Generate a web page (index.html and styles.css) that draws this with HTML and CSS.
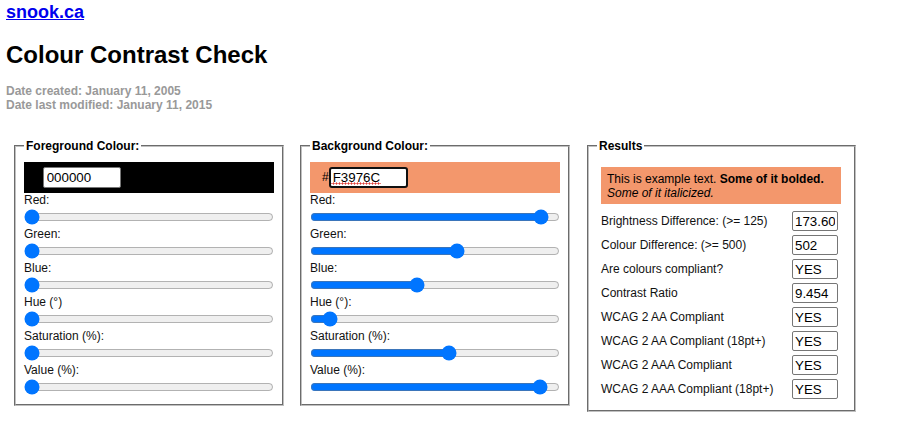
FILE: index.html
```html
<!DOCTYPE html>
<html lang="en">
<head>
<meta charset="utf-8">
<title>Colour Contrast Check</title>
<link rel="stylesheet" href="styles.css">
</head>
<body>
<div class="page">
  <a class="site" href="#">snook.ca</a>
  <h1 class="title">Colour Contrast Check</h1>
  <p class="dates">Date created: January 11, 2005<br>Date last modified: January 11, 2015</p>

  <form class="panels">
    <fieldset class="panel">
      <legend class="legend">Foreground Colour:</legend>
      <div class="swatch swatch-fg">#<input class="hex" type="text" value="000000"></div>
      <label class="lbl">Red:</label>
      <input class="slider" type="range" min="0" max="255" value="0">
      <label class="lbl">Green:</label>
      <input class="slider" type="range" min="0" max="255" value="0">
      <label class="lbl">Blue:</label>
      <input class="slider" type="range" min="0" max="255" value="0">
      <label class="lbl">Hue (°)</label>
      <input class="slider" type="range" min="0" max="360" value="0">
      <label class="lbl">Saturation (%):</label>
      <input class="slider" type="range" min="0" max="100" value="0">
      <label class="lbl">Value (%):</label>
      <input class="slider" type="range" min="0" max="100" value="0">
    </fieldset>

    <fieldset class="panel">
      <legend class="legend">Background Colour:</legend>
      <div class="swatch swatch-bg">#<input class="hex hex-focus" type="text" value="F3976C" spellcheck="false"></div>
      <label class="lbl">Red:</label>
      <input class="slider" type="range" min="0" max="255" value="243">
      <label class="lbl">Green:</label>
      <input class="slider" type="range" min="0" max="255" value="151">
      <label class="lbl">Blue:</label>
      <input class="slider" type="range" min="0" max="255" value="108">
      <label class="lbl">Hue (°):</label>
      <input class="slider" type="range" min="0" max="360" value="19">
      <label class="lbl">Saturation (%):</label>
      <input class="slider" type="range" min="0" max="100" value="56">
      <label class="lbl">Value (%):</label>
      <input class="slider" type="range" min="0" max="100" value="95">
    </fieldset>

    <fieldset class="panel panel-results">
      <legend class="legend">Results</legend>
      <div class="example">This is example text. <strong>Some of it bolded.</strong><br><em>Some of it italicized.</em></div>
      <table class="results">
        <tr><td class="rl">Brightness Difference: (&gt;= 125)</td><td class="rv"><input class="out" type="text" value="173.60"></td></tr>
        <tr><td class="rl">Colour Difference: (&gt;= 500)</td><td class="rv"><input class="out" type="text" value="502"></td></tr>
        <tr><td class="rl">Are colours compliant?</td><td class="rv"><input class="out" type="text" value="YES"></td></tr>
        <tr><td class="rl">Contrast Ratio</td><td class="rv"><input class="out" type="text" value="9.454"></td></tr>
        <tr><td class="rl">WCAG 2 AA Compliant</td><td class="rv"><input class="out" type="text" value="YES"></td></tr>
        <tr><td class="rl">WCAG 2 AA Compliant (18pt+)</td><td class="rv"><input class="out" type="text" value="YES"></td></tr>
        <tr><td class="rl">WCAG 2 AAA Compliant</td><td class="rv"><input class="out" type="text" value="YES"></td></tr>
        <tr><td class="rl">WCAG 2 AAA Compliant (18pt+)</td><td class="rv"><input class="out" type="text" value="YES"></td></tr>
      </table>
    </fieldset>
  </form>
</div>
</body>
</html>
```

FILE: styles.css
```css
html, body {
  margin: 0;
  padding: 0;
  background: #fff;
}

body {
  font-family: "Liberation Sans", Arial, sans-serif;
  font-size: 12px;
  color: #111;
}

.page {
  padding: 2px 6px 0 6px;
}

.site {
  display: block;
  width: max-content;
  font-size: 18px;
  font-weight: bold;
  line-height: 20px;
  color: #0000ee;
  text-decoration: underline;
}

.title {
  margin: 19px 0 15px 0;
  font-size: 24px;
  line-height: 27px;
  font-weight: bold;
  color: #000;
}

.dates {
  margin: 0 0 28px 0;
  padding-top: 1px;
  font-weight: bold;
  line-height: 14px;
  color: #999;
}

.panels {
  display: flex;
  align-items: flex-start;
  gap: 16px;
  margin: -1px 0 0 8px;
}

.panel {
  box-sizing: border-box;
  width: 270px;
  margin: 0;
  padding: 9px 8px 7px 8px;
  border: 2px groove #c0c0c0;
  min-width: 0;
}

.panel-results {
  width: 269px;
  margin-left: 1px;
  padding-bottom: 8px;
}

.legend {
  padding: 0 2px;
  font-weight: bold;
  line-height: 14px;
  color: #000;
}

.swatch {
  box-sizing: border-box;
  width: 250px;
  height: 31px;
  padding: 5px 0 5px 12px;
  line-height: 21px;
  color: #000;
  white-space: nowrap;
}

.swatch-fg {
  background: #000000;
}

.swatch-bg {
  background: #f3976c;
}

.hex {
  box-sizing: border-box;
  width: 78px;
  height: 21px;
  margin: 0;
  padding: 1px 3px;
  border: 1px solid #767676;
  border-radius: 2px;
  background: #fff;
  font-family: "Liberation Sans", Arial, sans-serif;
  font-size: 13.33px;
  color: #000;
  vertical-align: top;
}

.hex-focus {
  width: 79px;
  padding: 0 2px;
  border: 2px solid #101010;
  border-radius: 3px;
  outline: none;
  background:
    linear-gradient(#fff, #fff) 50px 0 / 100% 100% no-repeat,
    radial-gradient(circle, #e0403a 0.9px, transparent 1.2px) 1px 13px / 3px 3px repeat-x,
    #fff;
}

.lbl {
  display: block;
  line-height: 14px;
  color: #111;
}

.slider {
  display: block;
  width: 250px;
  height: 16px;
  margin: 2px 0;
  padding: 0;
}

.example {
  box-sizing: border-box;
  width: 240px;
  height: 37px;
  margin: 5px 0 0 4px;
  padding: 5px 6px 4px 6px;
  line-height: 14px;
  background: #f3976c;
  color: #000;
}

.results {
  width: 243px;
  margin: 4px 0 0 1px;
  border-spacing: 2px;
  border-collapse: separate;
}

.results td {
  padding: 1px;
  vertical-align: middle;
}

.rl {
  color: #111;
  white-space: nowrap;
}

.rv {
  width: 46px;
}

.out {
  box-sizing: border-box;
  display: block;
  width: 46px;
  height: 20px;
  margin: 0;
  padding: 1px 2px;
  border: 1px solid #767676;
  border-radius: 2px;
  font-family: "Liberation Sans", Arial, sans-serif;
  font-size: 13.33px;
  color: #000;
  background: #fff;
}
```
